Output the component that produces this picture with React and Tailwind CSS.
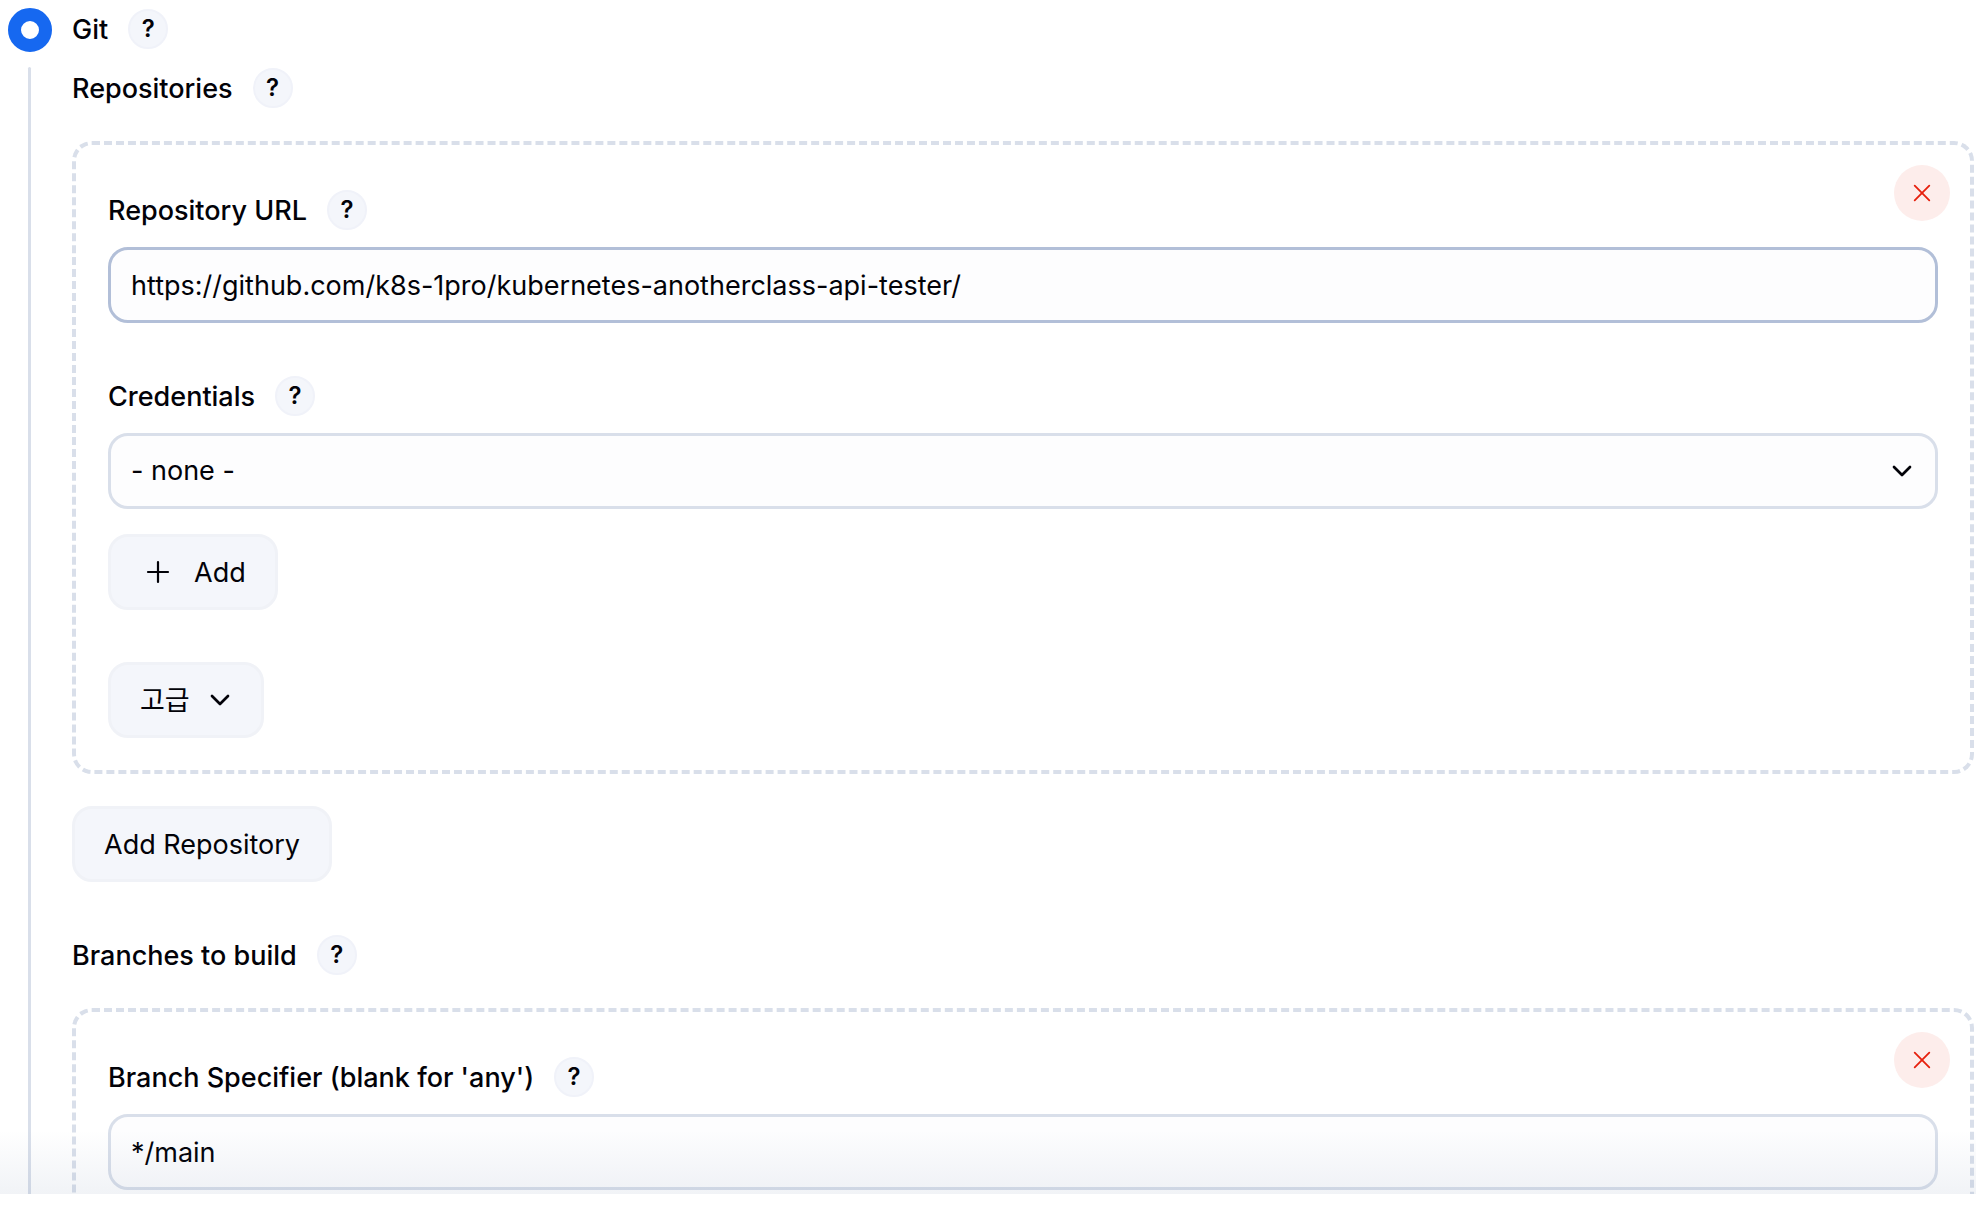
import { useState } from "react";

const PlusIcon = () => (
  <svg viewBox="0 0 36 36" className="size-9" fill="none" stroke="currentColor" strokeWidth="2.2" strokeLinecap="round" aria-hidden="true">
    <path d="M18 8v20M8 18h20" />
  </svg>
);

const CloseIcon = () => (
  <svg viewBox="0 0 24 24" className="size-6" fill="none" stroke="currentColor" strokeWidth="1.8" strokeLinecap="round" aria-hidden="true">
    <path d="M4.7 4.7l14.6 14.6M19.3 4.7L4.7 19.3" />
  </svg>
);

const ChevronIcon = () => (
  <svg viewBox="0 0 24 24" className="size-6" fill="none" stroke="currentColor" strokeWidth="2.7" strokeLinecap="round" strokeLinejoin="round" aria-hidden="true">
    <path d="M4 8l8 8 8-8" />
  </svg>
);

const HelpButton = ({ topic }) => (
  <button
    type="button"
    aria-label={`Help for feature: ${topic}`}
    className="flex size-10 shrink-0 items-center justify-center rounded-full border-2 border-[#f0f2f9] bg-[#f4f6fb] text-2xl leading-none font-semibold"
  >
    ?
  </button>
);

const LabelRow = ({ htmlFor, text }) => (
  <div className="flex h-10 items-center gap-5">
    {htmlFor ? (
      <label htmlFor={htmlFor} className="pt-0.5 font-medium">{text}</label>
    ) : (
      <h2 className="pt-0.5 font-medium">{text}</h2>
    )}
    <HelpButton topic={text} />
  </div>
);

const Button = ({ children }) => (
  <button
    type="button"
    className="flex h-[76px] items-center gap-[18px] rounded-[20px] border-3 border-[#f0f2f7] bg-[#f4f6fb] px-[29px]"
  >
    {children}
  </button>
);

const RepeatableBox = ({ label, children }) => (
  <section className="relative mt-[33px] rounded-[20px] border-4 border-dashed border-[#d9dfea] px-8 pt-[45px] pb-8">
    <button
      type="button"
      aria-label={label}
      className="absolute top-5 right-5 flex size-14 items-center justify-center rounded-full bg-[#fdedeb] text-[#e6200d]"
    >
      <CloseIcon />
    </button>
    {children}
  </section>
);

export default function App() {
  const [url, setUrl] = useState("https://github.com/k8s-1pro/kubernetes-anotherclass-api-tester/");
  const [branch, setBranch] = useState("*/main");

  return (
    <main className="h-screen bg-white pb-4 font-['Inter','Noto_Sans_CJK_KR',sans-serif] text-[27px] leading-9 text-[#020208]">
      <div className="relative h-full overflow-hidden">
        <div className="flex gap-5 pr-0.5 pl-2">
          <div className="flex w-11 shrink-0 flex-col gap-[15px] pt-2">
            <input
              type="radio"
              id="scm-git"
              name="scm"
              defaultChecked
              className="size-11 shrink-0 appearance-none rounded-full border-[13px] border-[#1668f0] bg-white"
            />
            <div className="ml-5 w-[3px] grow rounded-full bg-[#d9dfea]" />
          </div>

          <div className="min-w-0 grow pt-[9px]">
            <LabelRow htmlFor="scm-git" text="Git" />
            <div className="mt-[19px]">
              <LabelRow text="Repositories" />
            </div>

            <RepeatableBox label="Delete repository">
              <LabelRow htmlFor="repo-url" text="Repository URL" />
              <input
                id="repo-url"
                type="text"
                value={url}
                onChange={(e) => setUrl(e.target.value)}
                className="mt-[17px] block h-[76px] w-full rounded-[20px] border-3 border-[#b2bfd8] bg-[#fdfdfe] px-5 outline-none"
              />

              <div className="mt-[53px]">
                <LabelRow htmlFor="credentials" text="Credentials" />
              </div>
              <div className="relative mt-[17px]">
                <select
                  id="credentials"
                  className="block h-[76px] w-full appearance-none rounded-[20px] border-3 border-[#d9dfea] bg-[#fdfdfe] px-5 outline-none"
                >
                  <option>- none -</option>
                </select>
                <span className="pointer-events-none absolute inset-y-0 right-6 flex items-center">
                  <ChevronIcon />
                </span>
              </div>

              <div className="mt-[25px] flex flex-col items-start gap-[52px]">
                <Button>
                  <PlusIcon />
                  <span className="pt-0.5">Add</span>
                </Button>
                <Button>
                  <span className="pt-0.5">고급</span>
                  <ChevronIcon />
                </Button>
              </div>
            </RepeatableBox>

            <div className="mt-8 mb-[53px] flex">
              <Button>
                <span className="pt-0.5">Add Repository</span>
              </Button>
            </div>

            <LabelRow text="Branches to build" />
            <RepeatableBox label="Delete branch">
              <LabelRow htmlFor="branch" text="Branch Specifier (blank for 'any')" />
              <input
                id="branch"
                type="text"
                value={branch}
                onChange={(e) => setBranch(e.target.value)}
                className="mt-[17px] block h-[76px] w-full rounded-[20px] border-3 border-[#d9dfea] bg-[#fdfdfe] px-5 outline-none"
              />
            </RepeatableBox>
          </div>
        </div>

        <div className="pointer-events-none absolute inset-x-0 bottom-0 h-16 bg-linear-to-t from-[#4f6a94]/8 to-transparent" />
      </div>
    </main>
  );
}
